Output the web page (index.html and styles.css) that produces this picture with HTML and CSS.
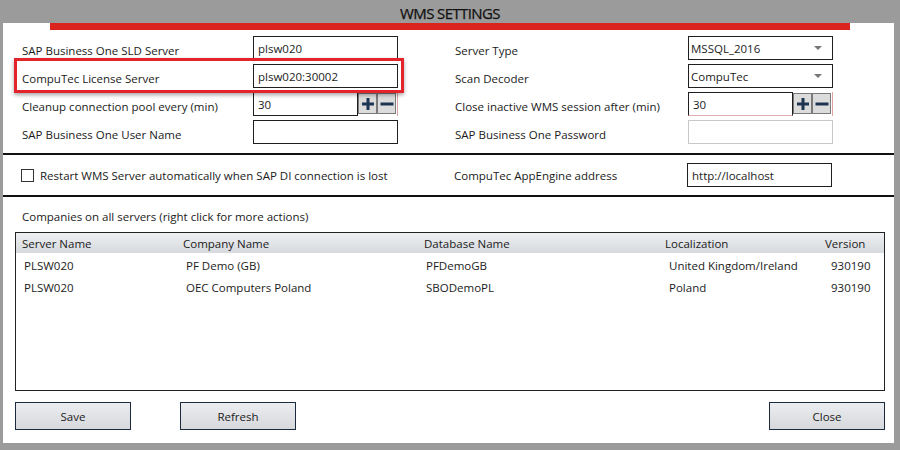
FILE: index.html
```html
<!DOCTYPE html>
<html>
<head>
<meta charset="utf-8">
<link rel="stylesheet" href="styles.css">
</head>
<body>
<div class="window">
  <div class="titlebar">WMS SETTINGS</div>
  <div class="panel">
    <div class="accent"></div>
    <div class="settings">
      <div class="highlight"></div>
      <div class="lbl c1">SAP Business One SLD Server</div>
      <div class="field c2">plsw020</div>
      <div class="lbl c4">Server Type</div>
      <div class="field select c5">MSSQL_2016<span class="arrow"></span></div>

      <div class="lbl c1">CompuTec License Server</div>
      <div class="field c2">plsw020:30002</div>
      <div class="lbl c4">Scan Decoder</div>
      <div class="field select c5">CompuTec<span class="arrow"></span></div>

      <div class="lbl c1">Cleanup connection pool every (min)</div>
      <div class="spin c2">
        <div class="spin-input">30</div>
        <div class="spin-btn"><svg width="14" height="14" viewBox="0 0 14 14"><path d="M7 1V13M1 7H13" stroke="#1e3552" stroke-width="3"/></svg></div>
        <div class="spin-btn"><svg width="14" height="14" viewBox="0 0 14 14"><path d="M0.5 7H13.5" stroke="#1e3552" stroke-width="3"/></svg></div>
      </div>
      <div class="lbl c4">Close inactive WMS session after (min)</div>
      <div class="spin invalid c5">
        <div class="spin-input">30</div>
        <div class="spin-btn"><svg width="14" height="14" viewBox="0 0 14 14"><path d="M7 1V13M1 7H13" stroke="#1e3552" stroke-width="3"/></svg></div>
        <div class="spin-btn"><svg width="14" height="14" viewBox="0 0 14 14"><path d="M0.5 7H13.5" stroke="#1e3552" stroke-width="3"/></svg></div>
      </div>

      <div class="lbl c1">SAP Business One User Name</div>
      <div class="field c2"></div>
      <div class="lbl c4">SAP Business One Password</div>
      <div class="field disabled c5"></div>
    </div>

    <div class="sep"></div>

    <div class="options">
      <div class="check c13"><span class="box"></span>Restart WMS Server automatically when SAP DI connection is lost</div>
      <div class="lbl c4">CompuTec AppEngine address</div>
      <div class="field c5">http://localhost</div>
    </div>

    <div class="sep"></div>

    <div class="caption">Companies on all servers (right click for more actions)</div>
    <div class="table">
      <div class="thead">
        <div>Server Name</div><div>Company Name</div><div>Database Name</div><div>Localization</div><div>Version</div>
      </div>
      <div class="trow">
        <div>PLSW020</div><div>PF Demo (GB)</div><div>PFDemoGB</div><div>United Kingdom/Ireland</div><div>930190</div>
      </div>
      <div class="trow">
        <div>PLSW020</div><div>OEC Computers Poland</div><div>SBODemoPL</div><div>Poland</div><div>930190</div>
      </div>
    </div>

    <div class="actions">
      <button class="btn">Save</button>
      <button class="btn">Refresh</button>
      <span class="spacer"></span>
      <button class="btn">Close</button>
    </div>
  </div>
</div>
</body>
</html>
```

FILE: styles.css
```css
html, body {
  margin: 0;
  padding: 0;
  background: #9b9b9b;
}
body {
  width: 900px;
  height: 450px;
  overflow: hidden;
  font-family: "Open Sans", "Noto Sans", sans-serif;
  font-size: 11.5px;
  color: #1b1b1b;
}
.window {
  display: flex;
  flex-direction: column;
  height: 450px;
}
.titlebar {
  height: 23px;
  line-height: 26px;
  text-align: center;
  font-size: 15px;
  letter-spacing: -0.6px;
  color: #111;
  -webkit-text-stroke: 0.25px #111;
}
.panel {
  background: #fff;
  margin: 0 6px 7px 3px;
  height: 420px;
  display: flex;
  flex-direction: column;
}
.accent {
  height: 7px;
  background: #db241e;
  margin: 0 44px 0 47px;
}
.settings {
  position: relative;
  display: grid;
  grid-template-columns: 231px 145px 57px 233px 145px;
  grid-auto-rows: 24px;
  row-gap: 4px;
  padding-left: 19px;
  margin-top: 6px;
}
.c1 { grid-column: 1; }
.c2 { grid-column: 2; }
.c4 { grid-column: 4; }
.c5 { grid-column: 5; }
.c13 { grid-column: 1 / 4; }
.lbl {
  display: flex;
  align-items: center;
  padding-top: 4px;
  white-space: nowrap;
}
.field {
  box-sizing: border-box;
  border: 1px solid #1f1f1f;
  padding: 0 4px;
  display: flex;
  align-items: center;
  height: 24px;
  white-space: nowrap;
}
.field.disabled {
  border-color: #c8c8c8;
}
.select {
  padding-left: 2px;
  justify-content: space-between;
}
.arrow {
  width: 0;
  height: 0;
  border-left: 4px solid transparent;
  border-right: 4px solid transparent;
  border-top: 4px solid #777;
  margin-right: 6px;
}
.spin {
  display: flex;
  height: 24px;
  box-sizing: border-box;
  border-right: 1px solid #dba3a3;
}
.spin-input {
  flex: 1;
  box-sizing: border-box;
  border: 1px solid #1f1f1f;
  padding: 0 4px;
  display: flex;
  align-items: center;
}
.spin.invalid .spin-input {
  border-bottom-color: #e0b0b0;
}
.spin-btn {
  width: 19px;
  height: 21px;
  margin-top: 1px;
  box-sizing: border-box;
  background: #dcdcdc;
  border: 1px solid #7a7a7a;
  display: flex;
  align-items: center;
  justify-content: center;
}
.spin-btn + .spin-btn {
  margin-right: 1px;
}
.highlight {
  position: absolute;
  left: 11px;
  top: 22px;
  width: 390px;
  height: 35px;
  box-sizing: border-box;
  border: 3px solid #e3242b;
  box-shadow: 0 2px 4px rgba(0,0,0,0.35);
  pointer-events: none;
  z-index: 2;
}
.sep {
  height: 2px;
  background: #111;
  flex: none;
}
.settings + .sep {
  margin-top: 9px;
}
.options {
  display: grid;
  grid-template-columns: 231px 145px 57px 233px 145px;
  grid-auto-rows: 24px;
  padding: 8px 0 8px 18px;
}
.check {
  display: flex;
  align-items: center;
  white-space: nowrap;
}
.box {
  width: 13px;
  height: 13px;
  box-sizing: border-box;
  border: 1px solid #333;
  margin-right: 6px;
  background: #fff;
}
.options .lbl {
  padding-top: 0;
}
.caption {
  margin: 12px 0 0 19px;
  line-height: 16px;
}
.table {
  margin: 7px 9px 0 12px;
  height: 159px;
  box-sizing: border-box;
  border: 1px solid #222;
}
.thead, .trow {
  display: grid;
  grid-template-columns: 161px 241px 241px 160px 1fr;
  white-space: nowrap;
}
.thead {
  height: 20px;
  align-items: center;
  background: linear-gradient(#eef0f2, #d6d9dd);
  padding-left: 6px;
  margin-bottom: 1px;
}
.trow {
  height: 22px;
  align-items: center;
  padding-left: 8px;
}
.trow div:nth-child(2) { padding-left: 1px; }
.trow div:nth-child(4) { padding-left: 2px; }
.trow div:nth-child(5) { padding-left: 4px; }
.actions {
  display: flex;
  margin: 11px 9px 0 12px;
  gap: 49px;
}
.spacer {
  flex: 1;
}
.btn {
  width: 116px;
  height: 28px;
  box-sizing: border-box;
  border: 1px solid #1b2a3c;
  background: linear-gradient(#ecedf0, #d6d8dc);
  font-family: "Open Sans", "Noto Sans", sans-serif;
  font-size: 11.5px;
  color: #1b1b1b;
  padding: 0;
}
```
